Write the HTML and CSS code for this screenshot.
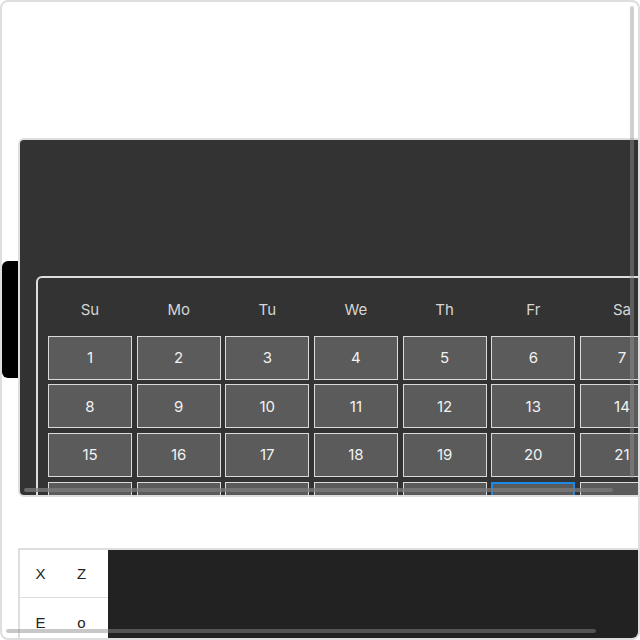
FILE: index.html
```html
<!DOCTYPE html>
<html lang="en">
<head>
<meta charset="utf-8">
<title>Calendar</title>
<link rel="stylesheet" href="styles.css">
</head>
<body>
<div class="frame">
  <div class="stage">
    <div class="tab"></div>
    <div class="panel">
      <div class="calendar">
        <div class="wd">Su</div><div class="wd">Mo</div><div class="wd">Tu</div><div class="wd">We</div><div class="wd">Th</div><div class="wd">Fr</div><div class="wd">Sa</div>
        <div class="day">1</div><div class="day">2</div><div class="day">3</div><div class="day">4</div><div class="day">5</div><div class="day">6</div><div class="day">7</div>
        <div class="day">8</div><div class="day">9</div><div class="day">10</div><div class="day">11</div><div class="day">12</div><div class="day">13</div><div class="day">14</div>
        <div class="day">15</div><div class="day">16</div><div class="day">17</div><div class="day">18</div><div class="day">19</div><div class="day">20</div><div class="day">21</div>
        <div class="day">22</div><div class="day">23</div><div class="day">24</div><div class="day">25</div><div class="day">26</div><div class="day focus">27</div><div class="day">28</div>
      </div>
      <div class="hscroll"></div>
    </div>
  </div>
  <div class="lower">
    <div class="keys">
      <div class="key sep">X</div><div class="key sep">Z</div>
      <div class="key">E</div><div class="key">o</div>
    </div>
    <div class="fill"></div>
  </div>
  <div class="vthumb"></div>
  <div class="bthumb"></div>
</div>
</body>
</html>
```
FILE: styles.css
```css
html, body {
  margin: 0;
  padding: 0;
  overflow: hidden;
  background: #ffffff;
}

.frame {
  position: relative;
  width: 640px;
  height: 640px;
  box-sizing: border-box;
  border: 2px solid #dedede;
  border-radius: 8px;
  overflow: hidden;
  background: #ffffff;
  padding-top: 136px;
}

.stage {
  display: flex;
  align-items: flex-start;
}

.tab {
  flex: none;
  width: 16px;
  height: 117px;
  margin-top: 123px;
  background: #000000;
  border-radius: 6px 0 0 6px;
}

.panel {
  position: relative;
  flex: none;
  width: 680px;
  height: 359px;
  box-sizing: border-box;
  border: 2px solid #dedede;
  border-radius: 6px;
  background: #333333;
  overflow: hidden;
  padding: 136px 0 0 16px;
}

.calendar {
  width: 640px;
  box-sizing: border-box;
  border: 2px solid #dedede;
  border-radius: 6px;
  padding: 10px;
  display: grid;
  grid-template-columns: repeat(7, 84px);
  grid-template-rows: 43px repeat(4, 44px);
  column-gap: 4.67px;
  row-gap: 4.67px;
  font-family: Inter, "Noto Sans", sans-serif;
  font-size: 15px;
}

.wd {
  display: flex;
  align-items: center;
  justify-content: center;
  color: #d6d6d6;
}

.day {
  display: flex;
  align-items: center;
  justify-content: center;
  box-sizing: border-box;
  border: 1px solid #dadada;
  background: #5b5b5b;
  color: #f2f2f2;
}

.day.focus {
  border: 2px solid #1e88e5;
}

.hscroll {
  position: absolute;
  left: 4px;
  top: 348px;
  width: 589px;
  height: 4px;
  border-radius: 2px;
  background: rgba(124, 124, 124, 0.77);
}

.lower {
  margin-top: 51px;
  margin-left: 16px;
  width: 680px;
  height: 120px;
  box-sizing: border-box;
  border: 2px solid #dedede;
  display: flex;
  background: #ffffff;
}

.keys {
  flex: none;
  width: 88px;
  display: grid;
  grid-template-columns: 41px 41px;
  grid-auto-rows: 48px;
  align-content: start;
  font-family: "Liberation Sans", Arial, sans-serif;
  font-size: 15px;
  color: #222222;
}

.key {
  display: flex;
  align-items: center;
  justify-content: center;
}

.key.sep {
  border-bottom: 1px solid #dedede;
}

.keys .key:nth-child(2) {
  width: 47px;
  justify-content: flex-start;
  padding-left: 16px;
  box-sizing: border-box;
}

.fill {
  flex: 1;
  background: #222222;
}

.vthumb {
  position: absolute;
  left: 628px;
  top: 4px;
  width: 4px;
  height: 472px;
  border-radius: 2px;
  background: rgba(148, 148, 148, 0.44);
}

.bthumb {
  position: absolute;
  left: 4px;
  top: 627px;
  width: 590px;
  height: 4px;
  border-radius: 2px;
  background: rgba(140, 140, 140, 0.48);
}
```
